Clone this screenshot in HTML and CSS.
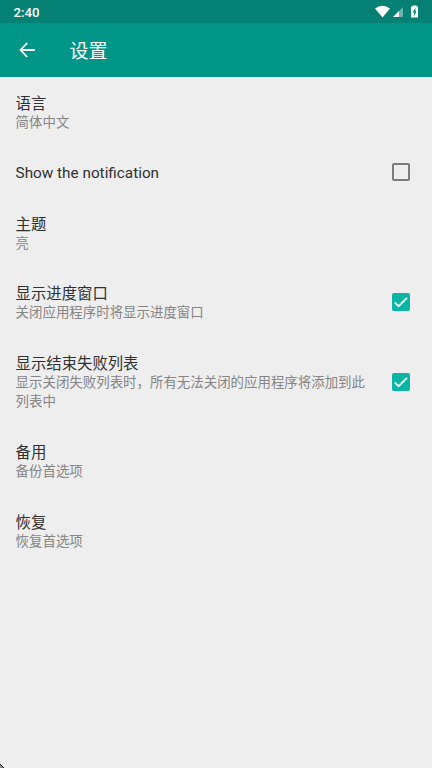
FILE: index.html
```html
<!DOCTYPE html>
<html lang="zh-CN">
<head>
<meta charset="utf-8">
<title>设置</title>
<link rel="stylesheet" href="styles.css">
</head>
<body>
<div class="screen">
  <header class="status">
    <span class="clock">2:40</span>
    <svg class="status-icons" width="44" height="14" viewBox="0 0 44 14">
      <path class="solid" d="M0 3.500Q7.500-2 15 3.500L7.500 12.500Z"/>
      <path class="faint" d="M28 2V12H18Z"/>
      <path class="solid" d="M24 6V12H18Z"/>
      <path class="solid" fill-rule="evenodd" d="M36 1.500h1.500V.5h4v1H43V12.500h-7ZM40.500 3 37.500 7.500h1.600v3.500L41.500 6.500H40.500Z"/>
    </svg>
  </header>
  <nav class="toolbar">
    <svg class="back" width="16" height="16" viewBox="0 0 16 16"><path d="M15.800 8H2M8.200 1 1.500 8l6.700 7"/></svg>
    <h1 class="heading">设置</h1>
  </nav>
  <main class="list">
    <section class="item"><div class="text"><h2 class="title">语言</h2><p class="summary">简体中文</p></div></section>
    <section class="item single"><div class="text"><h2 class="title">Show the notification</h2></div><span class="box"></span></section>
    <section class="item"><div class="text"><h2 class="title">主题</h2><p class="summary">亮</p></div></section>
    <section class="item"><div class="text"><h2 class="title">显示进度窗口</h2><p class="summary">关闭应用程序时将显示进度窗口</p></div><span class="box checked"><svg width="18" height="18" viewBox="0 0 18 18"><path d="m2.700 9.300 3.900 3.900 8.400-8.400"/></svg></span></section>
    <section class="item tall"><div class="text"><h2 class="title">显示结束失败列表</h2><p class="summary">显示关闭失败列表时，所有无法关闭的应用程序将添加到此列表中</p></div><span class="box checked"><svg width="18" height="18" viewBox="0 0 18 18"><path d="m2.700 9.300 3.900 3.900 8.400-8.400"/></svg></span></section>
    <section class="item"><div class="text"><h2 class="title">备用</h2><p class="summary">备份首选项</p></div></section>
    <section class="item"><div class="text"><h2 class="title">恢复</h2><p class="summary">恢复首选项</p></div></section>
  </main>
  <svg class="corner" width="4" height="4" viewBox="0 0 4 4"><path fill="#7f947b" d="M0 1h1v1h1v1h1v1H0Z"/><path fill="#171b17" d="M0 0h1v1H0ZM1 1h1v1H1ZM2 2h1v1H2ZM3 3h1v1H3Z"/></svg>
</div>
</body>
</html>
```
FILE: styles.css
```css
* { box-sizing: border-box; margin: 0; }
body { font-family: Roboto, "Noto Sans CJK SC", sans-serif; background: #eee; }
.screen { height: 768px; overflow: hidden; position: relative; }
.status { height: 23px; background: #048074; color: #fff; display: flex; align-items: center; justify-content: space-between; padding: 1px 13px 0 13.5px; }
.clock { font-size: 13.2px; font-weight: 500; }
.solid { fill: #fff; }
.faint { fill: #fff; opacity: .4; }
.toolbar { height: 54px; background: #009687; display: flex; align-items: center; padding-left: 19px; gap: 34.5px; }
.back path { fill: none; stroke: #fff; stroke-width: 1.8; }
.heading { color: #fff; font-size: 19px; font-weight: 400; line-height: 28px; padding-top: 3px; }
.list { padding-top: 1px; }
.item { display: flex; align-items: center; justify-content: space-between; padding: 15px 22px 15px 15.6px; }
.item.single { height: 51px; padding-top: 0; padding-bottom: 0; }
.text { width: 353px; }
.title { color: #303030; font-size: 15.36px; font-weight: 400; line-height: 22px; margin-bottom: -2px; }
.single .title { line-height: 20px; margin-bottom: 0; font-size: 15.3px; }
.summary { color: #858585; font-size: 13.44px; line-height: 19.6px; }
.box { width: 18px; height: 18px; border: 2px solid #7c7c7c; border-radius: 2px; margin-bottom: 2px; }
.tall .box { margin-bottom: 0; }
.checked { border: 0; background: #0bb5a4; }
.checked svg { display: block; }
.checked path { fill: none; stroke: #fff; stroke-width: 1.8; }
.corner { position: absolute; left: 0; bottom: 0; }
```
